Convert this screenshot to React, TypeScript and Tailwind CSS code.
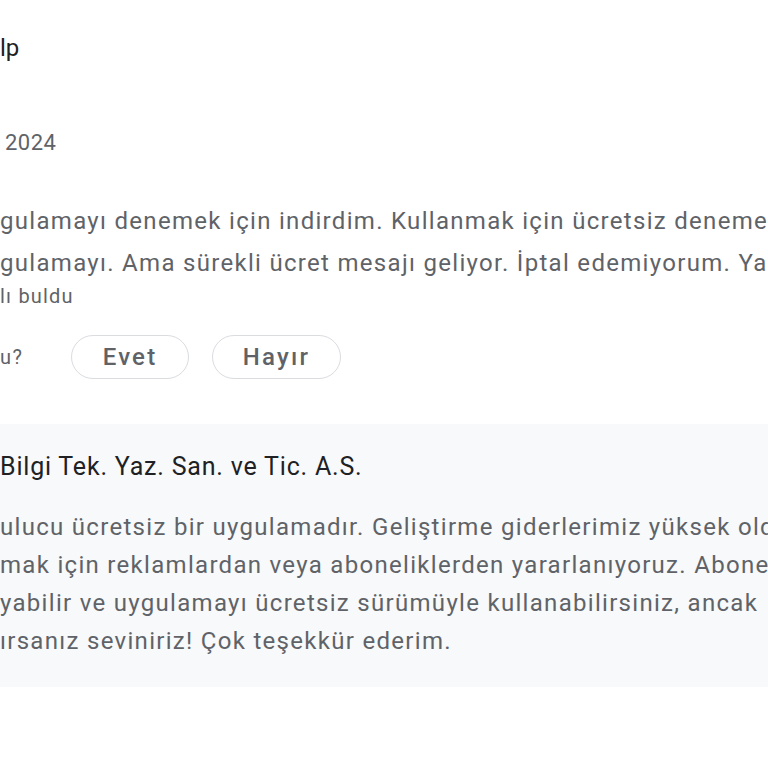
const font = { fontFamily: "Roboto, 'Noto Sans', sans-serif" };

const review = [
  "gulamayı denemek için indirdim. Kullanmak için ücretsiz denemesi",
  "gulamayı. Ama sürekli ücret mesajı geliyor. İptal edemiyorum. Yazılım",
];

const reply = [
  "ulucu ücretsiz bir uygulamadır. Geliştirme giderlerimiz yüksek olduğu",
  "mak için reklamlardan veya aboneliklerden yararlanıyoruz. Abonelik",
  "yabilir ve uygulamayı ücretsiz sürümüyle kullanabilirsiniz, ancak",
  "ırsanız seviniriz! Çok teşekkür ederim.",
];

const Pill = ({ label, className }: { label: string; className: string }) => (
  <button
    className={`h-[44px] rounded-full border border-[#dadce0] bg-white text-[24px] font-medium tracking-[2.2px] text-[#5f6368] ${className}`}
  >
    {label}
  </button>
);

export default function App() {
  return (
    <div
      className="h-[768px] w-[768px] overflow-hidden bg-white whitespace-nowrap"
      style={font}
    >
      <div className="pt-[33px] text-[24px] leading-[30px] text-[#202124]">lp</div>

      <div className="mt-[68px] pl-[5px] text-[22px] leading-[24px] tracking-[0.5px] text-[#5f6368]">
        2024
      </div>

      <div className="mt-[45px] text-[24px] leading-[42px] tracking-[1.3px] text-[#5f6368]">
        {review.map((l) => (
          <div key={l}>{l}</div>
        ))}
      </div>

      <div className="text-[20px] leading-[24px] tracking-[1.2px] text-[#5f6368]">lı buldu</div>

      <div className="mt-[27px] flex items-center">
        <span className="w-[25px] text-[20px] tracking-[1.5px] text-[#5f6368]">u?</span>
        <Pill label="Evet" className="ml-[46px] w-[118px]" />
        <Pill label="Hayır" className="ml-[23px] w-[129px]" />
      </div>

      <div className="mt-[45px] bg-[#f8f9fa] pt-[28px] pb-[27px]">
        <div className="text-[25px] leading-[30px] tracking-[0.8px] text-[#202124]">
          Bilgi Tek. Yaz. San. ve Tic. A.S.
        </div>
        <div className="mt-[26px] text-[24px] leading-[38px] tracking-[1.3px] text-[#5f6368]">
          {reply.map((l) => (
            <div key={l}>{l}</div>
          ))}
        </div>
      </div>
    </div>
  );
}
